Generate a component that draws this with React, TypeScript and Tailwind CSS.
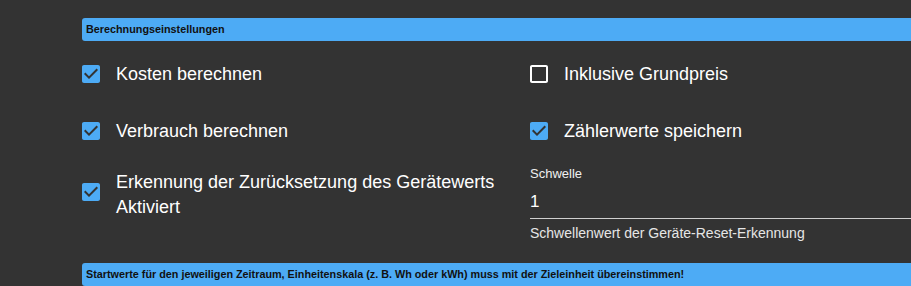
import React from "react";

const CheckedIcon = () => (
  <svg viewBox="0 0 24 24" className="w-6 h-6 shrink-0 -ml-[3px]" fill="#4dabf5">
    <path d="M19 3H5c-1.11 0-2 .9-2 2v14c0 1.1.89 2 2 2h14c1.11 0 2-.9 2-2V5c0-1.1-.89-2-2-2zm-9 14l-5-5 1.41-1.41L10 14.17l7.59-7.59L19 8l-9 9z" />
  </svg>
);

const UncheckedIcon = () => (
  <svg viewBox="0 0 24 24" className="w-6 h-6 shrink-0 -ml-[3px]" fill="#ffffff">
    <path d="M19 5v14H5V5h14m0-2H5c-1.1 0-2 .9-2 2v14c0 1.1.9 2 2 2h14c1.1 0 2-.9 2-2V5c0-1.1-.9-2-2-2z" />
  </svg>
);

const CheckRow = ({ label, checked }: { label: string; checked: boolean }) => (
  <div className="flex items-center gap-[13px]">
    {checked ? <CheckedIcon /> : <UncheckedIcon />}
    <span className="text-[18px] leading-[25px] text-white">{label}</span>
  </div>
);

const SectionBar = ({ text }: { text: string }) => (
  <div className="h-[23px] rounded-[3px] bg-[#4dabf5] pl-[4px] flex items-center text-[10.8px] font-bold text-[#111]">
    {text}
  </div>
);

export default function App() {
  return (
    <div
      className="w-[911px] h-[286px] overflow-hidden bg-[#333333] pl-[82px] pt-[18px]"
      style={{ fontFamily: '"Liberation Sans", Arial, sans-serif' }}
    >
      <div className="w-[896px]">
        <SectionBar text="Berechnungseinstellungen" />

        <div className="grid grid-cols-[448px_1fr]">
          {/* row 1 */}
          <div className="h-[66px] flex items-center">
            <CheckRow label="Kosten berechnen" checked />
          </div>
          <div className="h-[66px] flex items-center">
            <CheckRow label="Inklusive Grundpreis" checked={false} />
          </div>

          {/* row 2 */}
          <div className="h-[48px] flex items-center">
            <CheckRow label="Verbrauch berechnen" checked />
          </div>
          <div className="h-[48px] flex items-center">
            <CheckRow label="Zählerwerte speichern" checked />
          </div>

          {/* row 3 */}
          <div className="h-[108px] pt-[15px] flex items-start gap-[13px]">
            <div className="mt-[10px]">
              <CheckedIcon />
            </div>
            <span className="text-[18px] leading-[25px] text-white">
              Erkennung der Zurücksetzung des Gerätewerts
              <br />
              Aktiviert
            </span>
          </div>
          <div className="h-[108px] pt-[11px] flex flex-col">
            <label className="text-[13px] leading-[16px] text-[#f0f0f0]">Schwelle</label>
            <div className="mt-[10px] pb-[6px] border-b border-[#cfcfcf] text-[17px] leading-[20px] text-white">
              1
            </div>
            <p className="mt-[6px] text-[14px] leading-[16px] text-[#e6e6e6]">
              Schwellenwert der Geräte-Reset-Erkennung
            </p>
          </div>
        </div>

        <SectionBar text="Startwerte für den jeweiligen Zeitraum, Einheitenskala (z. B. Wh oder kWh) muss mit der Zieleinheit übereinstimmen!" />
      </div>
    </div>
  );
}
